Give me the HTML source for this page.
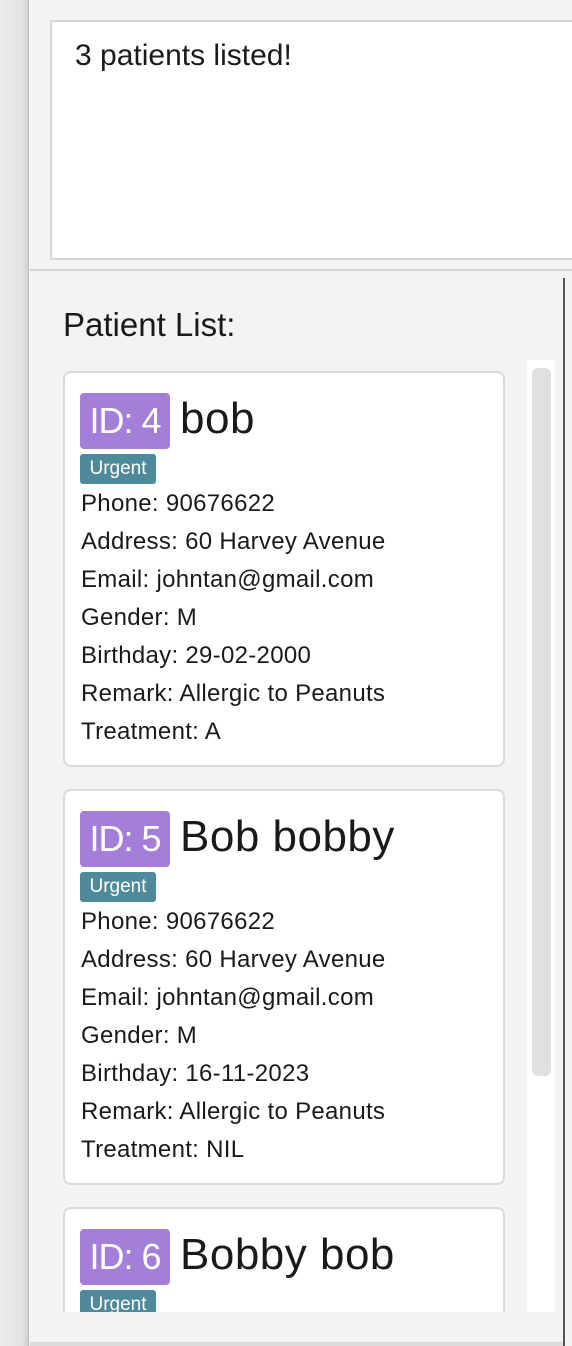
<!DOCTYPE html>
<html><head><meta charset="utf-8"><style>
*{margin:0;padding:0;box-sizing:border-box}
html{overflow:hidden}
body{width:572px;height:1346px;overflow:hidden;background:#f3f3f3;font-family:"Liberation Sans",sans-serif;color:#1a1a1a;position:relative}
.gut{position:absolute;left:0;top:0;width:29px;height:1346px;background:linear-gradient(90deg,#ececec,#e2e2e2 80%,#d0d0d0);border-right:1px solid #bdbdbd}
.res{position:absolute;left:50px;top:20px;width:522px;height:240px;background:#fff;border:2px solid #d6d6d6;border-right:none}
.res span{position:absolute;left:23px;top:17px;font-size:30px;white-space:nowrap}
.sep{position:absolute;left:30px;top:269px;width:542px;height:2px;background:#d4d4d4}
.vline{position:absolute;left:563px;top:278px;width:2px;height:1068px;background:#555}
.bot{position:absolute;left:30px;top:1342px;width:533px;height:4px;background:#dcdcdc}
h2{position:absolute;left:63px;top:306px;font-weight:normal;font-size:33px;white-space:nowrap}
.track{position:absolute;left:527px;top:360px;width:28px;height:952px;background:#fff}
.thumb{position:absolute;left:532px;top:368px;width:19px;height:708px;background:#e0e0e0;border-radius:6px}
.clip{position:absolute;left:60px;top:360px;width:460px;height:952px;overflow:hidden}
.card{position:absolute;left:3px;width:442px;height:396px;background:#fff;border:2px solid #dadada;border-radius:8px}
.id{position:absolute;left:15px;top:20px;height:56px;width:90px;background:#a37fd9;color:#fff;border-radius:4px;font-size:36px;line-height:56px;text-align:center;letter-spacing:-1px}
.nm{position:absolute;left:115px;top:18px;font-size:44px;line-height:56px;letter-spacing:0.5px;white-space:nowrap}
.tag{position:absolute;left:15px;top:81px;height:30px;width:76px;background:#4f8a9b;color:#fff;border-radius:3px;font-size:19px;line-height:30px;text-align:center}
.ln{position:absolute;left:16px;font-size:24px;line-height:38px;letter-spacing:0.3px;white-space:nowrap}
</style></head><body>
<div class="gut"></div>
<div class="res"><span>3 patients listed!</span></div>
<div class="sep"></div>
<div class="vline"></div>
<h2>Patient List:</h2>
<div class="track"></div><div class="thumb"></div>
<div class="clip">
<div class="card" style="top:11px">
<div class="id">ID: 4</div><div class="nm">bob</div><div class="tag">Urgent</div>
<div class="ln" style="top:112px">Phone: 90676622</div>
<div class="ln" style="top:150px">Address: 60 Harvey Avenue</div>
<div class="ln" style="top:188px">Email: johntan@gmail.com</div>
<div class="ln" style="top:226px">Gender: M</div>
<div class="ln" style="top:264px">Birthday: 29-02-2000</div>
<div class="ln" style="top:302px">Remark: Allergic to Peanuts</div>
<div class="ln" style="top:340px">Treatment: A</div>
</div>
<div class="card" style="top:429px">
<div class="id">ID: 5</div><div class="nm">Bob bobby</div><div class="tag">Urgent</div>
<div class="ln" style="top:112px">Phone: 90676622</div>
<div class="ln" style="top:150px">Address: 60 Harvey Avenue</div>
<div class="ln" style="top:188px">Email: johntan@gmail.com</div>
<div class="ln" style="top:226px">Gender: M</div>
<div class="ln" style="top:264px">Birthday: 16-11-2023</div>
<div class="ln" style="top:302px">Remark: Allergic to Peanuts</div>
<div class="ln" style="top:340px">Treatment: NIL</div>
</div>
<div class="card" style="top:847px">
<div class="id">ID: 6</div><div class="nm">Bobby bob</div><div class="tag">Urgent</div>
</div>
</div>
<div class="bot"></div>
</body></html>
